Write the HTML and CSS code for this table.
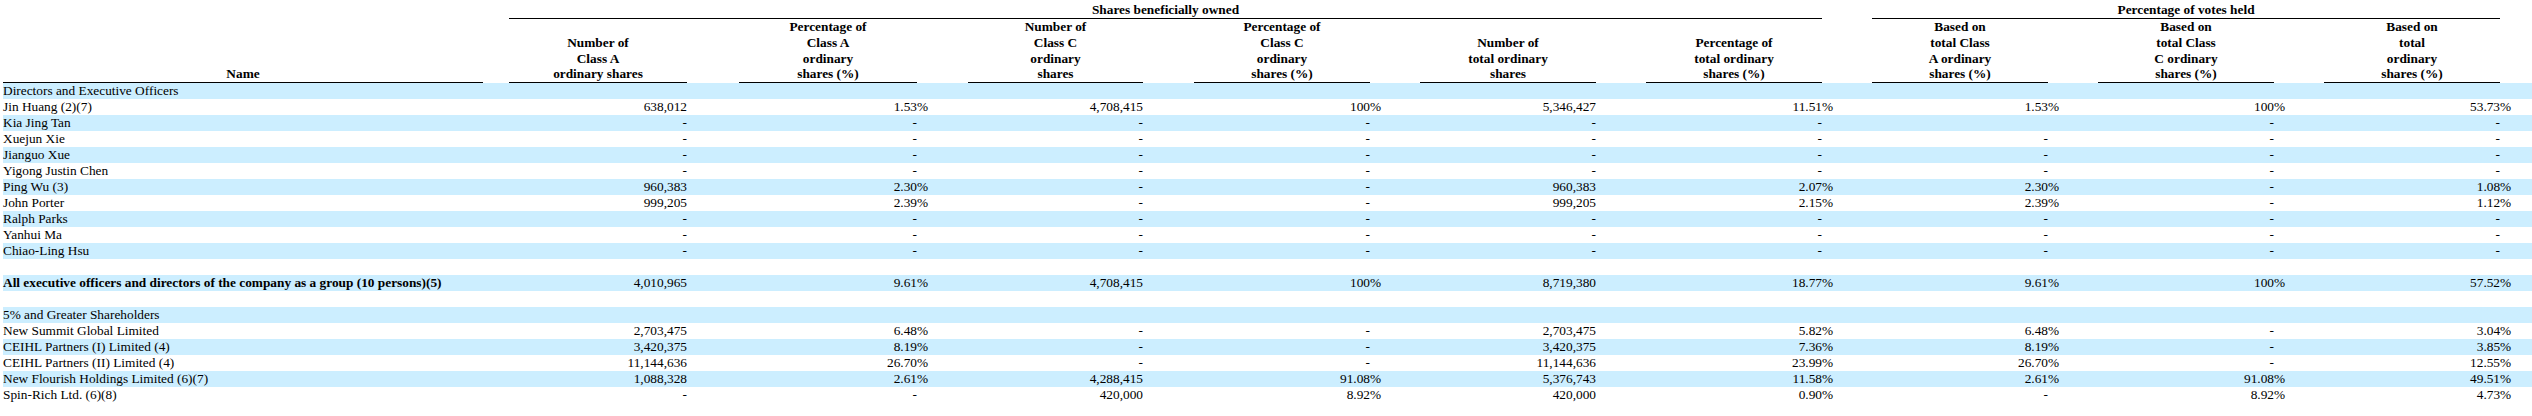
FILE: index.html
```html
<!DOCTYPE html>
<html>
<head>
<meta charset="utf-8">
<title>Beneficial ownership</title>
<link rel="stylesheet" href="styles.css">
</head>
<body>
<table class="t">
<colgroup>
<col class="c-name"><col class="c-g0">
<col class="c-v178"><col class="c-g52">
<col class="c-v178"><col class="c-g51">
<col class="c-v175"><col class="c-g51">
<col class="c-v176"><col class="c-g50">
<col class="c-v176"><col class="c-g50">
<col class="c-v176"><col class="c-g50">
<col class="c-v176"><col class="c-g50">
<col class="c-v176"><col class="c-g50">
<col class="c-v176"><col class="c-g32">
</colgroup>
<thead>
<tr class="h1">
<td></td><td></td>
<td colspan="11" class="grp">Shares beneficially owned</td>
<td></td>
<td colspan="5" class="grp">Percentage of votes held</td>
<td></td>
</tr>
<tr class="h2">
<td class="ul">Name</td><td></td>
<td class="ul">Number of<br>Class A<br>ordinary shares</td><td></td>
<td class="ul">Percentage of<br>Class A<br>ordinary<br>shares (%)</td><td></td>
<td class="ul">Number of<br>Class C<br>ordinary<br>shares</td><td></td>
<td class="ul">Percentage of<br>Class C<br>ordinary<br>shares (%)</td><td></td>
<td class="ul">Number of<br>total ordinary<br>shares</td><td></td>
<td class="ul">Percentage of<br>total ordinary<br>shares (%)</td><td></td>
<td class="ul">Based on<br>total Class<br>A ordinary<br>shares (%)</td><td></td>
<td class="ul">Based on<br>total Class<br>C ordinary<br>shares (%)</td><td></td>
<td class="ul">Based on<br>total<br>ordinary<br>shares (%)</td><td></td>
</tr>
</thead>
<tbody>
<tr class="b"><td class="n">Directors and Executive Officers</td><td></td><td></td><td></td><td></td><td></td><td></td><td></td><td></td><td></td><td></td><td></td><td></td><td></td><td></td><td></td><td></td><td></td><td></td><td></td></tr>
<tr><td class="n">Jin Huang (2)(7)</td><td></td><td class="v">638,012</td><td></td><td class="v">1.53</td><td class="s">%</td><td class="v">4,708,415</td><td></td><td class="v">100</td><td class="s">%</td><td class="v">5,346,427</td><td></td><td class="v">11.51</td><td class="s">%</td><td class="v">1.53</td><td class="s">%</td><td class="v">100</td><td class="s">%</td><td class="v">53.73</td><td class="s">%</td></tr>
<tr class="b"><td class="n">Kia Jing Tan</td><td></td><td class="v">-</td><td></td><td class="v">-</td><td></td><td class="v">-</td><td></td><td class="v">-</td><td></td><td class="v">-</td><td></td><td class="v">-</td><td></td><td class="v"></td><td></td><td class="v">-</td><td></td><td class="v">-</td><td></td></tr>
<tr><td class="n">Xuejun Xie</td><td></td><td class="v">-</td><td></td><td class="v">-</td><td></td><td class="v">-</td><td></td><td class="v">-</td><td></td><td class="v">-</td><td></td><td class="v">-</td><td></td><td class="v">-</td><td></td><td class="v">-</td><td></td><td class="v">-</td><td></td></tr>
<tr class="b"><td class="n">Jianguo Xue</td><td></td><td class="v">-</td><td></td><td class="v">-</td><td></td><td class="v">-</td><td></td><td class="v">-</td><td></td><td class="v">-</td><td></td><td class="v">-</td><td></td><td class="v">-</td><td></td><td class="v">-</td><td></td><td class="v">-</td><td></td></tr>
<tr><td class="n">Yigong Justin Chen</td><td></td><td class="v">-</td><td></td><td class="v">-</td><td></td><td class="v">-</td><td></td><td class="v">-</td><td></td><td class="v">-</td><td></td><td class="v">-</td><td></td><td class="v">-</td><td></td><td class="v">-</td><td></td><td class="v">-</td><td></td></tr>
<tr class="b"><td class="n">Ping Wu (3)</td><td></td><td class="v">960,383</td><td></td><td class="v">2.30</td><td class="s">%</td><td class="v">-</td><td></td><td class="v">-</td><td></td><td class="v">960,383</td><td></td><td class="v">2.07</td><td class="s">%</td><td class="v">2.30</td><td class="s">%</td><td class="v">-</td><td></td><td class="v">1.08</td><td class="s">%</td></tr>
<tr><td class="n">John Porter</td><td></td><td class="v">999,205</td><td></td><td class="v">2.39</td><td class="s">%</td><td class="v">-</td><td></td><td class="v">-</td><td></td><td class="v">999,205</td><td></td><td class="v">2.15</td><td class="s">%</td><td class="v">2.39</td><td class="s">%</td><td class="v">-</td><td></td><td class="v">1.12</td><td class="s">%</td></tr>
<tr class="b"><td class="n">Ralph Parks</td><td></td><td class="v">-</td><td></td><td class="v">-</td><td></td><td class="v">-</td><td></td><td class="v">-</td><td></td><td class="v">-</td><td></td><td class="v">-</td><td></td><td class="v">-</td><td></td><td class="v">-</td><td></td><td class="v">-</td><td></td></tr>
<tr><td class="n">Yanhui Ma</td><td></td><td class="v">-</td><td></td><td class="v">-</td><td></td><td class="v">-</td><td></td><td class="v">-</td><td></td><td class="v">-</td><td></td><td class="v">-</td><td></td><td class="v">-</td><td></td><td class="v">-</td><td></td><td class="v">-</td><td></td></tr>
<tr class="b"><td class="n">Chiao-Ling Hsu</td><td></td><td class="v">-</td><td></td><td class="v">-</td><td></td><td class="v">-</td><td></td><td class="v">-</td><td></td><td class="v">-</td><td></td><td class="v">-</td><td></td><td class="v">-</td><td></td><td class="v">-</td><td></td><td class="v">-</td><td></td></tr>
<tr><td class="n">&nbsp;</td><td></td><td></td><td></td><td></td><td></td><td></td><td></td><td></td><td></td><td></td><td></td><td></td><td></td><td></td><td></td><td></td><td></td><td></td><td></td></tr>
<tr class="b"><td class="n bold">All executive officers and directors of the company as a group (10 persons)(5)</td><td></td><td class="v">4,010,965</td><td></td><td class="v">9.61</td><td class="s">%</td><td class="v">4,708,415</td><td></td><td class="v">100</td><td class="s">%</td><td class="v">8,719,380</td><td></td><td class="v">18.77</td><td class="s">%</td><td class="v">9.61</td><td class="s">%</td><td class="v">100</td><td class="s">%</td><td class="v">57.52</td><td class="s">%</td></tr>
<tr><td class="n">&nbsp;</td><td></td><td></td><td></td><td></td><td></td><td></td><td></td><td></td><td></td><td></td><td></td><td></td><td></td><td></td><td></td><td></td><td></td><td></td><td></td></tr>
<tr class="b"><td class="n">5% and Greater Shareholders</td><td></td><td></td><td></td><td></td><td></td><td></td><td></td><td></td><td></td><td></td><td></td><td></td><td></td><td></td><td></td><td></td><td></td><td></td><td></td></tr>
<tr><td class="n">New Summit Global Limited</td><td></td><td class="v">2,703,475</td><td></td><td class="v">6.48</td><td class="s">%</td><td class="v">-</td><td></td><td class="v">-</td><td></td><td class="v">2,703,475</td><td></td><td class="v">5.82</td><td class="s">%</td><td class="v">6.48</td><td class="s">%</td><td class="v">-</td><td></td><td class="v">3.04</td><td class="s">%</td></tr>
<tr class="b"><td class="n">CEIHL Partners (I) Limited (4)</td><td></td><td class="v">3,420,375</td><td></td><td class="v">8.19</td><td class="s">%</td><td class="v">-</td><td></td><td class="v">-</td><td></td><td class="v">3,420,375</td><td></td><td class="v">7.36</td><td class="s">%</td><td class="v">8.19</td><td class="s">%</td><td class="v">-</td><td></td><td class="v">3.85</td><td class="s">%</td></tr>
<tr><td class="n">CEIHL Partners (II) Limited (4)</td><td></td><td class="v">11,144,636</td><td></td><td class="v">26.70</td><td class="s">%</td><td class="v">-</td><td></td><td class="v">-</td><td></td><td class="v">11,144,636</td><td></td><td class="v">23.99</td><td class="s">%</td><td class="v">26.70</td><td class="s">%</td><td class="v">-</td><td></td><td class="v">12.55</td><td class="s">%</td></tr>
<tr class="b"><td class="n">New Flourish Holdings Limited (6)(7)</td><td></td><td class="v">1,088,328</td><td></td><td class="v">2.61</td><td class="s">%</td><td class="v">4,288,415</td><td></td><td class="v">91.08</td><td class="s">%</td><td class="v">5,376,743</td><td></td><td class="v">11.58</td><td class="s">%</td><td class="v">2.61</td><td class="s">%</td><td class="v">91.08</td><td class="s">%</td><td class="v">49.51</td><td class="s">%</td></tr>
<tr><td class="n">Spin-Rich Ltd. (6)(8)</td><td></td><td class="v">-</td><td></td><td class="v">-</td><td></td><td class="v">420,000</td><td></td><td class="v">8.92</td><td class="s">%</td><td class="v">420,000</td><td></td><td class="v">0.90</td><td class="s">%</td><td class="v">-</td><td></td><td class="v">8.92</td><td class="s">%</td><td class="v">4.73</td><td class="s">%</td></tr>
</tbody>
</table>
</body>
</html>
```
FILE: styles.css
```css
html, body {
  margin: 0;
  padding: 0;
  background: #ffffff;
}
body {
  padding: 2px 0 0 3px;
}
.t {
  border-collapse: separate;
  border-spacing: 0;
  table-layout: fixed;
  width: 2529px;
  font-family: "Liberation Serif", "Times New Roman", serif;
  font-size: 13.33px;
  color: #000000;
}
.t td {
  padding: 0;
  line-height: 16px;
  white-space: nowrap;
  vertical-align: bottom;
  overflow: visible;
}
.c-name { width: 480px; }
.c-g0 { width: 26px; }
.c-v178 { width: 178px; }
.c-v175 { width: 175px; }
.c-v176 { width: 176px; }
.c-g52 { width: 52px; }
.c-g51 { width: 51px; }
.c-g50 { width: 50px; }
.c-g32 { width: 32px; }

.h1 td, .h2 td {
  font-weight: bold;
  text-align: center;
}
.h2 td {
  line-height: 15.75px;
}
.grp {
  border-bottom: 1px solid #000000;
}
.ul {
  border-bottom: 1px solid #000000;
}
.t tr.b td {
  background: #cceeff;
}
.n {
  text-align: left;
}
.bold {
  font-weight: bold;
}
.v {
  text-align: right;
}
.s {
  text-align: left;
}
```
